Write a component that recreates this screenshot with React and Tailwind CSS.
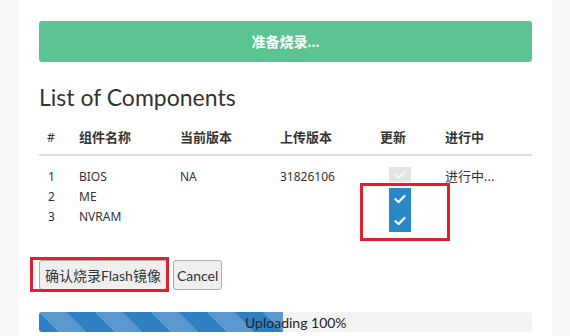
import React from "react";

const latin = { fontFamily: 'Lato, "Noto Sans CJK SC", sans-serif' };
const cjk = { fontFamily: '"Noto Sans", "Noto Sans CJK SC", sans-serif' };

function Check({ color }) {
  return (
    <svg width="12" height="10" viewBox="0 0 12 10">
      <path d="M1.5 5.2 L4.6 8 L10.5 2" fill="none" stroke={color} strokeWidth="2.2" strokeLinecap="round" strokeLinejoin="round" />
    </svg>
  );
}

const rows = [
  { n: "1", name: "BIOS", cur: "NA", up: "31826106", status: "进行中...", box: "disabled" },
  { n: "2", name: "ME", cur: "", up: "", status: "", box: "on" },
  { n: "3", name: "NVRAM", cur: "", up: "", status: "", box: "on" },
];

export default function App() {
  return (
    <div className="w-[570px] h-[336px] overflow-hidden flex bg-[#f7f7f7]" style={cjk}>
      <div className="w-[18px] shrink-0" />
      <div className="relative w-[534px] shrink-0 bg-white pl-[21px] pr-[20px] pt-[21px]">
        <div className="h-[41px] rounded-[3px] bg-[#5bc492] flex items-center justify-center text-white text-[14px] font-bold">
          准备烧录...
        </div>

        <h2 className="mt-[20px] text-[23px] leading-[30px] text-[#333] font-normal" style={latin}>
          List of Components
        </h2>

        <div className="mt-[10px] text-[#333]">
          <div className="grid grid-cols-[40px_101px_100px_100px_65px_1fr] h-[34px] items-center border-b-2 border-[#dddddd] text-[13px] font-bold">
            <div className="pl-[8px] font-normal text-[12px]">#</div>
            <div>组件名称</div>
            <div>当前版本</div>
            <div>上传版本</div>
            <div>更新</div>
            <div>进行中</div>
          </div>
          <div className="pt-[11px] text-[12px]">
            {rows.map((r, i) => (
              <div key={i} className="grid grid-cols-[40px_101px_100px_100px_65px_1fr] h-[20px] items-center">
                <div className="pl-[9px]">{r.n}</div>
                <div>{r.name}</div>
                <div>{r.cur}</div>
                <div>{r.up}</div>
                <div className="h-full relative">
                  {r.box === "disabled" && (
                    <div className="absolute left-[9px] top-0 w-[22px] h-[15px] bg-[#e4e4e4] flex items-center justify-center">
                      <Check color="#f6f6f6" />
                    </div>
                  )}
                  {r.box === "on" && (
                    <div className={"absolute left-[9px] w-[22px] h-[22px] bg-[#2a87c8] flex items-center justify-center " + (i === 1 ? "top-[1px]" : "top-[3px]")}>
                      <Check color="#ffffff" />
                    </div>
                  )}
                </div>
                <div className="text-[13px]">{r.status}</div>
              </div>
            ))}
          </div>
        </div>

        <div className="mt-[33px] flex gap-[6px] text-[14px] text-[#333]" style={latin}>
          <button className="h-[30px] px-[5px] rounded-[3px] border border-[#adadad] bg-[#efefef]">确认烧录Flash镜像</button>
          <button className="h-[30px] px-[3px] rounded-[3px] border border-[#adadad] bg-[#efefef]">Cancel</button>
        </div>

        <div className="mt-[22px] relative h-[20px] rounded-[3px] bg-[#f3f3f3] overflow-hidden">
          <div
            className="h-full w-[244px] bg-[#2f7fc3]"
            style={{
              backgroundImage:
                "linear-gradient(45deg, rgba(255,255,255,.2) 25%, transparent 25%, transparent 50%, rgba(255,255,255,.2) 50%, rgba(255,255,255,.2) 75%, transparent 75%, transparent)",
              backgroundSize: "56px 56px",
            }}
          />
          <div className="absolute inset-0 flex items-center pl-[206px] text-[14px] text-[#222]" style={latin}>
            Uploading 100%
          </div>
        </div>

        <div className="absolute left-[342px] top-[183px] w-[90px] h-[58px] border-[3px] border-[#e0202c]" />
        <div className="absolute left-[12px] top-[257px] w-[139px] h-[35px] border-[3px] border-[#e0202c]" />
      </div>
      <div className="flex-1" />
    </div>
  );
}
